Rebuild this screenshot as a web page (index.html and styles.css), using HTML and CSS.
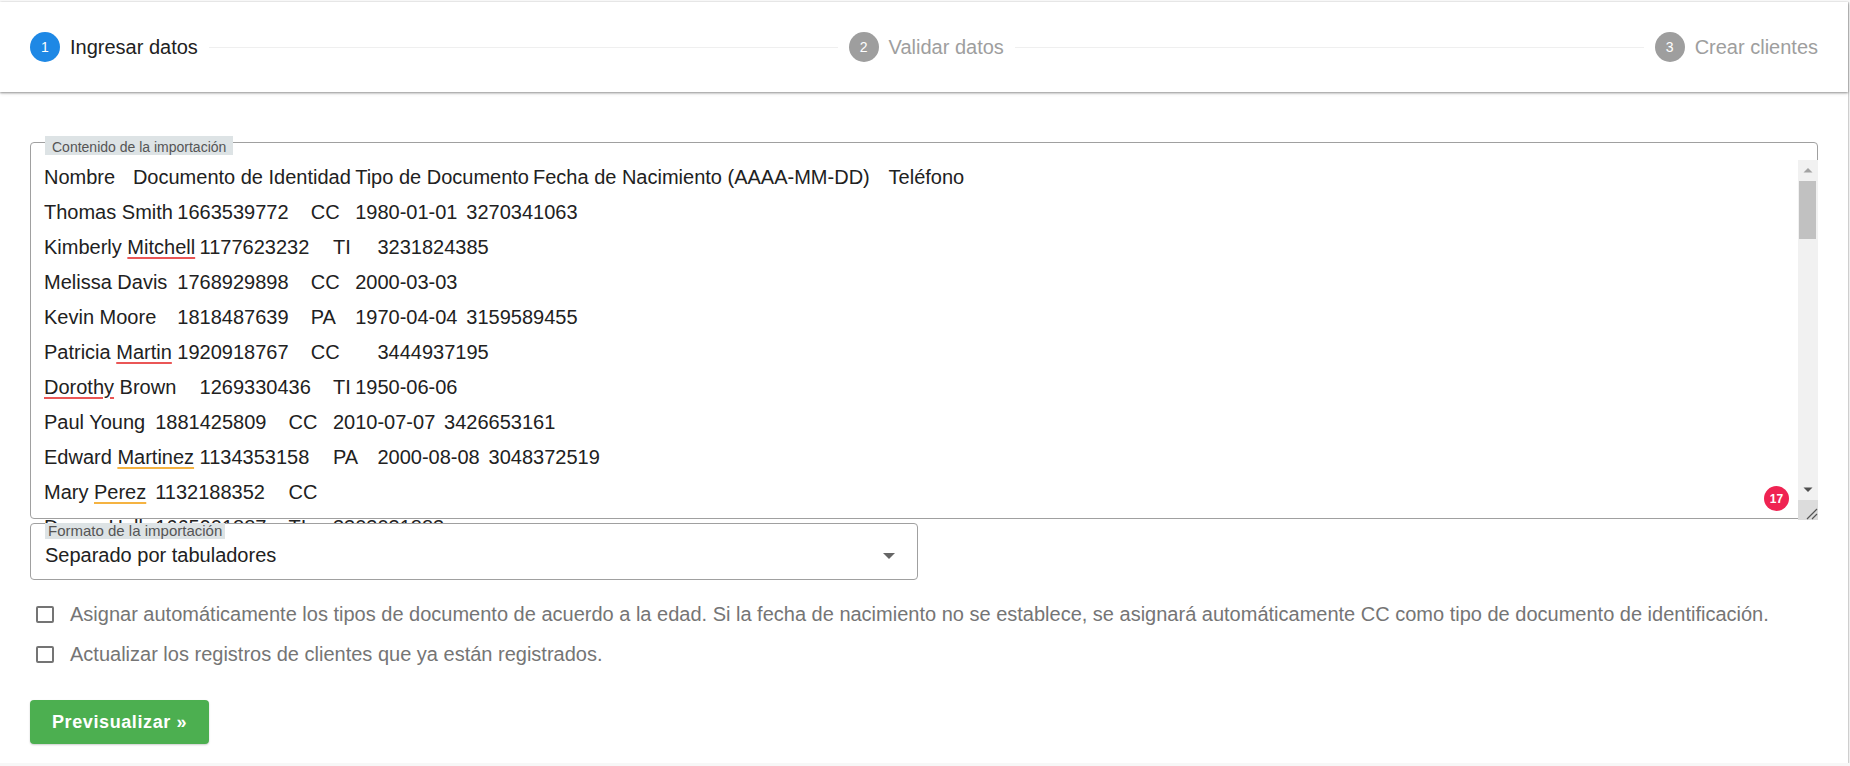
FILE: index.html
```html
<!DOCTYPE html>
<html lang="es">
<head>
<meta charset="utf-8">
<title>Importar clientes</title>
<link rel="stylesheet" href="styles.css">
</head>
<body>
<div class="page">
  <header class="stepper">
    <div class="step active"><span class="step-num">1</span><span class="step-label">Ingresar datos</span></div>
    <div class="step-line"></div>
    <div class="step"><span class="step-num">2</span><span class="step-label">Validar datos</span></div>
    <div class="step-line"></div>
    <div class="step"><span class="step-num">3</span><span class="step-label">Crear clientes</span></div>
  </header>

  <main class="content">
    <div class="import-field">
      <span class="legend legend-main">Contenido de la importación</span>
      <div class="import-scroll">
        <div class="import-lines">
          <div class="ln">Nombre&#9;Documento de Identidad&#9;Tipo de Documento&#9;Fecha de Nacimiento (AAAA-MM-DD)&#9;Teléfono</div>
          <div class="ln">Thomas Smith&#9;1663539772&#9;CC&#9;1980-01-01&#9;3270341063</div>
          <div class="ln">Kimberly <span class="sp-red">Mitchell</span>&#9;1177623232&#9;TI&#9;&#9;3231824385</div>
          <div class="ln">Melissa Davis&#9;1768929898&#9;CC&#9;2000-03-03</div>
          <div class="ln">Kevin Moore&#9;1818487639&#9;PA&#9;1970-04-04&#9;3159589455</div>
          <div class="ln">Patricia <span class="sp-red">Martin</span>&#9;1920918767&#9;CC&#9;&#9;3444937195</div>
          <div class="ln"><span class="sp-red">Dorothy</span> Brown&#9;1269330436&#9;TI&#9;1950-06-06</div>
          <div class="ln">Paul Young&#9;1881425809&#9;CC&#9;2010-07-07&#9;3426653161</div>
          <div class="ln">Edward <span class="sp-orange">Martinez</span>&#9;1134353158&#9;PA&#9;2000-08-08&#9;3048372519</div>
          <div class="ln">Mary <span class="sp-orange">Perez</span>&#9;1132188352&#9;CC</div>
          <div class="ln">Donna Hall&#9;1665901887&#9;TI&#9;&#9;3303031883</div>
        </div>
        <div class="scrollbar">
          <div class="sb-btn"><svg width="10" height="6" viewBox="0 0 10 6"><path d="M0.5 5.5 L5 1 L9.5 5.5 Z" fill="#a3a3a3"/></svg></div>
          <div class="sb-track"><div class="sb-thumb"></div></div>
          <div class="sb-btn"><svg width="10" height="6" viewBox="0 0 10 6"><path d="M0.5 0.5 L9.5 0.5 L5 5 Z" fill="#505050"/></svg></div>
          <div class="sb-resize"><svg width="20" height="20" viewBox="0 0 20 20"><path d="M9 19 L19 9 M14 19 L19 14" stroke="#555" stroke-width="1.2" fill="none"/></svg></div>
        </div>
      </div>
      <span class="badge">17</span>
    </div>

    <div class="select-field">
      <span class="legend legend-select">Formato de la importación</span>
      <span class="select-value">Separado por tabuladores</span>
      <svg class="select-arrow" width="12" height="6" viewBox="0 0 12 6"><path d="M0 0 L12 0 L6 6 Z" fill="#666"/></svg>
    </div>

    <div class="checks">
      <label class="check-row"><span class="check-box"></span><span class="check-text">Asignar automáticamente los tipos de documento de acuerdo a la edad. Si la fecha de nacimiento no se establece, se asignará automáticamente CC como tipo de documento de identificación.</span></label>
      <label class="check-row"><span class="check-box"></span><span class="check-text">Actualizar los registros de clientes que ya están registrados.</span></label>
    </div>

    <button class="btn-preview" type="button">Previsualizar »</button>
  </main>
</div>
</body>
</html>
```

FILE: styles.css
```css
* {
  box-sizing: border-box;
}

html, body {
  margin: 0;
  padding: 0;
}

body {
  background: #f7f7f7;
  font-family: "Liberation Sans", Arial, sans-serif;
  color: #212121;
}

.page {
  width: 1848px;
  margin-top: 2px;
  background: #ffffff;
  box-shadow: 0 1px 2px rgba(0, 0, 0, 0.28), 1px 0 1px rgba(0, 0, 0, 0.08);
}

/* ---------- stepper ---------- */
.stepper {
  position: relative;
  z-index: 1;
  height: 90px;
  padding: 0 30px;
  display: flex;
  align-items: center;
  background: #ffffff;
  box-shadow: 0 1px 2px rgba(0, 0, 0, 0.38), 0 2px 4px rgba(0, 0, 0, 0.08);
}

.step {
  display: flex;
  align-items: center;
  gap: 10px;
  flex: none;
}

.step-num {
  width: 30px;
  height: 30px;
  border-radius: 50%;
  background: #9e9e9e;
  color: #ffffff;
  font-size: 14px;
  display: flex;
  align-items: center;
  justify-content: center;
}

.step-label {
  font-size: 20px;
  color: #9e9e9e;
}

.step.active .step-num {
  background: #1e88e5;
}

.step.active .step-label {
  color: #212121;
}

.step-line {
  flex: 1;
  height: 1px;
  background: #efefef;
  margin: 0 11px;
}

/* ---------- content ---------- */
.content {
  padding: 50px 30px 19px;
}

.legend {
  position: absolute;
  background: #dde3e5;
  color: #555555;
  white-space: nowrap;
}

.legend-main {
  left: 14px;
  top: -7px;
  font-size: 14px;
  line-height: 15px;
  padding: 4px 7px 0;
}

.legend-select {
  left: 14px;
  top: -1px;
  font-size: 15px;
  line-height: 16px;
  padding: 0 3px;
}

.import-field {
  position: relative;
  height: 377px;
  border: 1px solid #a0a0a0;
  border-radius: 4px;
  padding-top: 17px;
}

.import-scroll {
  display: flex;
  align-items: flex-start;
  height: 363px;
  margin-right: -1px;
}

.import-lines {
  flex: 1;
  height: 363px;
  overflow: hidden;
  padding-left: 13px;
  font-size: 20px;
  line-height: 35px;
  color: #212121;
}

.ln {
  white-space: pre;
  tab-size: 4;
  -moz-tab-size: 4;
  height: 35px;
}

.sp-red,
.sp-orange {
  text-decoration: underline;
  text-decoration-thickness: 2px;
  text-underline-offset: 3px;
}

.sp-red {
  text-decoration-color: #ea5656;
}

.sp-orange {
  text-decoration-color: #f5b341;
}

.scrollbar {
  width: 20px;
  height: 360px;
  background: #f1f1f1;
  display: flex;
  flex-direction: column;
  flex: none;
}

.sb-btn {
  height: 20px;
  display: flex;
  align-items: center;
  justify-content: center;
  flex: none;
}

.sb-btn svg {
  display: block;
}

.sb-track {
  flex: 1;
  padding: 1px 2px 0 1px;
}

.sb-thumb {
  height: 58px;
  background: #c1c1c1;
}

.sb-resize {
  height: 20px;
  background: #dcdcdc;
  flex: none;
}

.sb-resize svg {
  display: block;
}

.badge {
  position: absolute;
  right: 28px;
  bottom: 7px;
  width: 25px;
  height: 25px;
  border-radius: 50%;
  background: #ef2352;
  color: #ffffff;
  font-size: 12px;
  font-weight: bold;
  display: flex;
  align-items: center;
  justify-content: center;
}

/* ---------- select ---------- */
.select-field {
  position: relative;
  width: 888px;
  margin-top: 4px;
  border: 1px solid #a0a0a0;
  border-radius: 4px;
  padding: 20px 14px 12px;
  display: flex;
  align-items: center;
  justify-content: space-between;
  background: #ffffff;
}

.select-value {
  font-size: 20px;
  line-height: 23px;
  color: #212121;
}

.select-arrow {
  display: block;
  margin-right: 8px;
}

/* ---------- checkboxes ---------- */
.checks {
  margin-top: 14px;
}

.check-row {
  height: 40px;
  display: flex;
  align-items: center;
  gap: 16px;
  padding-left: 6px;
}

.check-box {
  width: 18px;
  height: 17px;
  border: 2px solid #747474;
  border-radius: 2px;
  flex: none;
}

.check-text {
  font-size: 20px;
  color: #757575;
  white-space: nowrap;
}

/* ---------- button ---------- */
.btn-preview {
  display: block;
  margin-top: 26px;
  height: 44px;
  padding: 0 22px;
  border: none;
  border-radius: 4px;
  background: #4caf50;
  color: #ffffff;
  font-family: "Liberation Sans", Arial, sans-serif;
  font-size: 18px;
  font-weight: bold;
  letter-spacing: 0.6px;
  box-shadow: 0 1px 2px rgba(0, 0, 0, 0.2);
}
```
